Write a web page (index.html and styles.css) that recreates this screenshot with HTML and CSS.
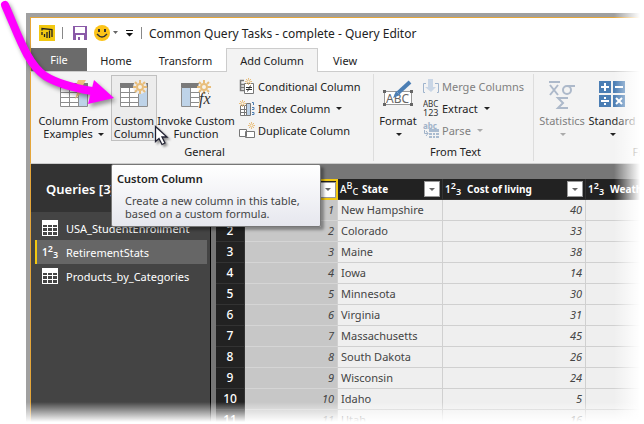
FILE: index.html
```html
<!DOCTYPE html>
<html lang="en">
<head>
<meta charset="utf-8">
<title>Common Query Tasks - complete - Query Editor</title>
<link rel="stylesheet" href="styles.css">
</head>
<body>
<svg class="defs" width="0" height="0" aria-hidden="true">
  <defs>
    <g id="spark" stroke="#e8bd7a" stroke-width="2" fill="none"><circle cx="7" cy="7" r="3" fill="#f7f3ea"/><path d="M7 0v3M7 11v3M0 7h3M11 7h3M2 2l2 2M10 10l2 2M12 2l-2 2M4 10l-2 2"/></g>
    <g id="sheet"><path fill="#fff" d="M0 0h28v24H0z"/><path fill="#7a7a7a" d="M0 0h28v5H0z"/><path fill="none" stroke="#8c8c8c" d="M.5 4v19.500h27V4M9.500 5v18M18.500 5v18M0 9.500h18M0 14.500h18M0 19.500h18"/></g>
    <g id="grid"><path fill="#fff" d="M0 0h16v16H0z"/><path fill="#444" d="M1 5h4v2H1zM6 5h4v2H6zM11 5h4v2h-4zM1 8h4v3H1zM6 8h4v3H6zM11 8h4v3h-4zM1 12h4v3H1zM6 12h4v3H6zM11 12h4v3h-4z"/></g>
  </defs>
</svg>
<main class="window">
  <header class="titlebar">
    <svg class="logo" width="16" height="16"><path fill="#f2c811" d="M0 0h16v16H0z"/><path fill="none" stroke="#222" stroke-width="1.300" d="M3 10V7M5.500 12V9M8 13V7M10.500 13V5.500M3 5.500V3.500l10 1v7.500"/></svg>
    <span class="bar"></span>
    <button class="quick" aria-label="Save"><svg width="14" height="14"><path fill="#8a5aa8" d="M0 0h14v14H0z"/><path fill="#fff" d="M2 1h10v6H2zM3 9h8v5H3z"/><path fill="#8a5aa8" d="M5 11h2v3H5z"/></svg></button>
    <button class="quick smile" aria-label="Send feedback"><svg width="25" height="16"><circle cx="8" cy="8" r="8" fill="#fcc419"/><path fill="#333" d="M4 4h2v3H4zM10 4h2v3h-2z"/><path fill="none" stroke="#333" stroke-width="1.300" d="M3 9q5 6 10 0"/><path fill="#666" d="M19 6h5l-2.500 3z"/></svg></button>
    <button class="quick more" aria-label="Customize toolbar"><svg width="8" height="8"><path fill="#111" d="M0 1h7v1H0zM0 4h7L3.500 7.500z"/></svg></button>
    <span class="bar"></span>
    <h1 class="title">Common Query Tasks - complete - Query Editor</h1>
  </header>
  <nav class="tabs">
    <button class="tab file">File</button>
    <button class="tab home">Home</button>
    <button class="tab transform">Transform</button>
    <button class="tab active">Add Column</button>
    <button class="tab view">View</button>
  </nav>
  <section class="ribbon">
    <div class="group general">
      <div class="tools">
        <button class="big examples"><svg width="28" height="28"><use href="#sheet" y="3"/><path fill="#bed3e8" d="M19 8h8v18h-8z"/><path fill="#ecc27e" d="M18 0h8l-4 7h5L15 19l3-9h-4z"/></svg><span>Column From<br>Examples <i class="caret"></i></span></button>
        <button class="big custom"><svg width="28" height="28"><use href="#sheet" y="3"/><path fill="#bed3e8" d="M19 8h8v18h-8z"/><circle cx="20" cy="7" r="7" fill="#ececec"/><use href="#spark" x="13"/></svg><span>Custom<br>Column</span></button>
        <button class="big invoke"><svg width="30" height="28"><use href="#sheet" y="3"/><path fill="#bed3e8" d="M1 8h8v18H1z"/><circle cx="24" cy="7" r="7" fill="#f3f3f3"/><use href="#spark" x="16"/><path fill="#f3f3f3" d="M20 14h10v14H17z"/><text x="18" y="24" font-family="Liberation Serif, serif" font-size="16" font-style="italic" fill="#333">fx</text></svg><span>Invoke Custom<br>Function</span></button>
        <div class="stack">
          <button class="small"><svg width="16" height="16"><path fill="none" stroke="#777" stroke-width="1.500" d="M5 2.500H1.500v10H5M1 6.500h4M1 9.500h4"/><path fill="#fff" stroke="#777" d="M5.500 5.500h9v10h-9z"/><path fill="none" stroke="#333" d="M7 9.500h6M7 11.500h6M11.500 7.500l-3 6"/><use href="#spark" transform="translate(6) scale(.5)"/></svg>Conditional Column</button>
          <button class="small"><svg width="16" height="16"><path fill="#fff" stroke="#777" d="M1.500 5.500h8v10h-8zM5.500 5v10M1 9.500h8M1 12.500h8"/><path fill="#bed3e8" stroke="#777" d="M7.500 3.500h4v12h-4z"/><path fill="none" stroke="#4b7eb4" d="M13 2.500h1.500V5M13 7.500h2v2h-2M13 12.500h2v2h-2"/><use href="#spark" transform="translate(0 0) scale(.5)"/></svg>Index Column <i class="caret"></i></button>
          <button class="small"><svg width="16" height="16"><path fill="#fff" stroke="#777" d="M.5 7.500h7v7h-7zM6.500 9.500h9v6h-9z"/><use href="#spark" transform="translate(9) scale(.5)"/></svg>Duplicate Column</button>
        </div>
      </div>
      <div class="caption">General</div>
    </div>
    <div class="group text">
      <div class="tools">
        <button class="big format"><svg width="32" height="28"><path fill="#fff" stroke="#999" d="M2.500 11.500h27v13h-27z"/><path fill="#666" d="M1 10h3v3H1zM28 10h3v3h-3zM1 23h3v3H1zM28 23h3v3h-3z"/><text x="4" y="23" font-family="Noto Sans, sans-serif" font-size="12" fill="#666">ABC</text><path stroke="#4b7eb4" stroke-width="4" d="M16 13L28 2"/><path fill="#4b7eb4" d="M11 18l3-7 4 4z"/></svg><span>Format<br><i class="caret"></i></span></button>
        <div class="stack">
          <button class="small dim" disabled><svg width="16" height="16"><path fill="#c9d6e6" d="M5 1h5v8h3l-5 5-6-5h3z"/><path fill="none" stroke="#9fb4cd" d="M3 5.500H.5v9H2M12 5.500h3.500v9H14"/></svg>Merge Columns</button>
          <button class="small"><svg width="17" height="18"><text y="8" font-family="Noto Sans, sans-serif" font-size="8" fill="#333">ABC</text><text y="17" font-family="Noto Sans, sans-serif" font-size="9" fill="#333">123</text></svg>Extract <i class="caret"></i></button>
          <button class="small dim" disabled><svg width="17" height="18"><text y="8" font-family="Noto Sans, sans-serif" font-size="8" font-weight="bold" fill="#a0b2c8">abc</text><path fill="#a9bbd0" d="M6 8h10v9H6z"/><path stroke="#f3f3f3" fill="none" d="M6 11.500h10M6 14.500h10M9.500 11v6M12.500 11v6"/><path stroke="#a0b2c8" fill="none" d="M1.500 9v3.500H5M3 10l2 2.500L3 15"/></svg>Parse <i class="caret"></i></button>
        </div>
      </div>
      <div class="caption">From Text</div>
    </div>
    <div class="group number">
      <div class="tools">
        <button class="big dim" disabled><svg width="28" height="30"><g fill="none" stroke="#adb9ca" stroke-width="2"><path d="M1 2h11M2 5l8 10M10 5L2 15"/><circle cx="19" cy="10" r="4"/><path d="M19 6h8M20 28H10l5-5-5-5h10"/></g></svg><span>Statistics<br><i class="caret"></i></span></button>
        <button class="big"><svg width="28" height="28"><path fill="#4b7eb4" d="M1 1h12v12H1zM15 1h12v12H15zM1 15h12v12H1zM15 15h12v12H15z"/><path stroke="#fff" stroke-width="2" d="M7 3v8M3 7h8M17 7h8M3 21h8M7 17v2M7 23v2M18 18l6 6M24 18l-6 6"/></svg><span>Standard<br><i class="caret"></i></span></button>
      </div>
      <div class="caption">From Number</div>
    </div>
  </section>
  <section class="workspace">
    <aside class="queries">
      <h2>Queries [3]</h2>
      <ul>
        <li><button><svg width="16" height="16"><use href="#grid"/></svg>USA_StudentEnrollment</button></li>
        <li><button class="selected"><span class="num">1<sup>2</sup><sub>3</sub></span>RetirementStats</button></li>
        <li><button><svg width="16" height="16"><use href="#grid"/></svg>Products_by_Categories</button></li>
      </ul>
    </aside>
    <div class="preview">
      <table>
        <colgroup><col class="c-index"><col class="c-rank"><col class="c-state"><col class="c-cost"><col></colgroup>
        <thead><tr>
          <th></th>
          <th class="picked"><div class="head"><button class="filter" aria-label="Filter rank"></button></div></th>
          <th><div class="head"><span class="type abc">A<sup>B</sup><sub>C</sub></span><span>State</span><button class="filter" aria-label="Filter State"></button></div></th>
          <th><div class="head"><span class="type num">1<sup>2</sup><sub>3</sub></span><span>Cost of living</span><button class="filter" aria-label="Filter Cost of living"></button></div></th>
          <th><div class="head"><span class="type num">1<sup>2</sup><sub>3</sub></span><span>Weather</span></div></th>
        </tr></thead>
        <tbody>
          <tr><th>1</th><td>1</td><td>New Hampshire</td><td>40</td><td></td></tr>
          <tr><th>2</th><td>2</td><td>Colorado</td><td>33</td><td></td></tr>
          <tr><th>3</th><td>3</td><td>Maine</td><td>38</td><td></td></tr>
          <tr><th>4</th><td>4</td><td>Iowa</td><td>14</td><td></td></tr>
          <tr><th>5</th><td>5</td><td>Minnesota</td><td>30</td><td></td></tr>
          <tr><th>6</th><td>6</td><td>Virginia</td><td>31</td><td></td></tr>
          <tr><th>7</th><td>7</td><td>Massachusetts</td><td>45</td><td></td></tr>
          <tr><th>8</th><td>8</td><td>South Dakota</td><td>26</td><td></td></tr>
          <tr><th>9</th><td>9</td><td>Wisconsin</td><td>24</td><td></td></tr>
          <tr><th>10</th><td>10</td><td>Idaho</td><td>5</td><td></td></tr>
          <tr><th>11</th><td>11</td><td>Utah</td><td>16</td><td></td></tr>
        </tbody>
      </table>
    </div>
  </section>
</main>
<div class="tooltip" role="tooltip"><strong>Custom Column</strong><p>Create a new column in this table,<br>based on a custom formula.</p></div>
<div class="fade-right"></div>
<div class="fade-bottom"></div>
<svg class="callout" width="180" height="160" aria-hidden="true">
  <g class="pointer"><path fill="none" stroke="#f0f" stroke-width="8" stroke-linecap="round" d="M5 5C18 34 27 64 45 76C58 84 74 88 92 91"/><path fill="#f0f" d="M94 80l20 18-26 6z"/></g>
  <path class="cursor" fill="#fff" stroke="#223" stroke-width="1.300" d="M155.500 126.500v15l3.500-3 3 6 3-1.500-3-6h5z"/>
</svg>
</body>
</html>
```
FILE: styles.css
```css
* { box-sizing: border-box; }
body { margin: 0; height: 100vh; overflow: hidden; position: relative; background: #fff; color: #222; font: 11px/13px "Noto Sans", "Open Sans", sans-serif; }
button { margin: 0; padding: 0; border: 0; background: none; color: inherit; font: inherit; white-space: nowrap; }
svg { display: block; flex: none; }
.defs { position: absolute; }
.window { margin: 13px 0 0 26px; height: calc(100vh - 13px); display: flex; flex-direction: column; border: solid #a0a0a0; border-width: 4px 0 0 4px; overflow: hidden; }
.titlebar { flex: none; height: 31px; display: flex; align-items: center; padding-left: 8px; border: solid #e5a63a; border-width: 1px 0 0 1px; }
.bar { width: 1px; height: 12px; background: #888; margin: 0 10px 0 7px; }
.smile { margin-left: 7px; }
.more { margin-left: 7px; }
.more + .bar { margin: 0 7px; }
.title { margin: 0; font-size: 12px; font-weight: 400; }
.tabs { flex: none; height: 24px; display: flex; border-bottom: 1px solid #ccc; border-left: 1px solid #e5a63a; }
.tab { height: 24px; }
.file { width: 56px; height: 23px; background: #6b6b6b; color: #fff; }
.home { width: 58px; }
.transform { width: 81px; }
.active { width: 92px; background: #f3f3f3; border: 1px solid #ccc; border-bottom: 0; }
.view { width: 54px; }

.ribbon { flex: none; display: flex; height: 92px; padding-top: 2px; background: #f3f3f3; border-left: 1px solid #e5a63a; border-bottom: 1px solid #ccc; overflow: hidden; }
.group { flex: none; display: flex; flex-direction: column; height: 87px; border-right: 1px solid #ddd; }
.general { width: 343px; padding-left: 5px; }
.text { width: 160px; padding-left: 4px; }
.number { width: 268px; padding-left: 3px; }
.tools { display: flex; height: 70px; padding-top: 1px; }
.caption { text-align: center; line-height: 22px; }
.big { width: 50px; height: 66px; padding-top: 4px; display: flex; flex-direction: column; align-items: center; border: 1px solid transparent; }
.big span { display: block; margin-top: auto; text-align: center; line-height: 13px; }
.examples { width: 75px; }
.custom { width: 46px; background: #ececec; border-color: #c0c0c0; }
.invoke { width: 78px; }
.format { width: 40px; margin-right: 4px; }
.dim { color: #808080; }
.caret { display: inline-block; vertical-align: 2px; margin-left: 2px; border: solid transparent; border-width: 3px 3px 0; border-top-color: #222; }
.dim .caret { border-top-color: #aaa; }
.stack { display: flex; flex-direction: column; padding-left: 4px; }
.big + .stack { flex: 1; }
.text .stack { padding-left: 1px; }
.small { height: 22px; display: flex; align-items: center; gap: 3px; }
.small svg { width: 16px; }
.small .caret { margin-left: 3px; }

.workspace { flex: 1; min-height: 0; display: flex; background: #777; border-left: 1px solid #e5a63a; }
.queries { flex: none; width: 180px; background: #444; border-right: 1px solid #000; color: #fff; }
.queries h2 { margin: 0; height: 48px; padding-left: 15px; line-height: 50px; background: #333; font-size: 13px; font-weight: 600; }
.queries ul { list-style: none; margin: 0; padding: 4px 3px 0 4px; }
.queries button { width: 100%; height: 24px; padding-left: 5px; display: flex; align-items: center; gap: 8px; border-left: 2px solid transparent; }
.queries .selected { background: #666; border-left-color: #f2c811; }
.num, .abc { width: 16px; line-height: 16px; font-size: 10px; white-space: nowrap; }
.num { font-weight: 600; }
.num sup, .num sub, .abc sup, .abc sub { font-size: 9px; line-height: 0; }
.num sup, .abc sup { vertical-align: 4px; }
.num sub, .abc sub { vertical-align: -2px; }

.preview { flex: 1; min-width: 0; padding: 15px 0 0 5px; overflow: hidden; }
table { width: 100%; table-layout: fixed; border-collapse: separate; border-spacing: 0; background: #efefef; font-size: 11px; }
.c-index { width: 29px; }
.c-rank { width: 93px; }
.c-state { width: 105px; }
.c-cost { width: 143px; }
th, td { height: 21px; padding: 0 3px; line-height: 20px; border: solid #d0d0d0; border-width: 0 1px 1px 0; overflow: hidden; white-space: nowrap; }
thead th { background: #222; color: #fff; border-color: #333; text-align: left; font-size: 10px; font-weight: 700; padding: 0 2px; }
thead .picked { padding: 0; border: 2px solid #f2c811; }
.head { display: flex; align-items: center; gap: 6px; }
.picked .head { height: 17px; }
.type.abc { font-weight: 500; }
.filter { width: 16px; height: 16px; margin-left: auto; background: #fff; border: 1px solid #999; display: grid; place-items: center; }
.filter::after { content: ""; border: solid transparent; border-width: 3px 3px 0; border-top-color: #666; }
tbody th { background: #222; color: #fff; border-color: #333; font-size: 12px; font-weight: 500; text-align: center; }
td { color: #444; }
td:nth-child(2) { background: #c7c7c7; border-bottom-color: #d5d5d5; }
td:nth-child(2), td:nth-child(4) { text-align: right; font-style: italic; }

.tooltip { position: absolute; left: 111px; top: 164px; width: 210px; height: 63px; padding: 7px 5px; background: linear-gradient(#fff, #e6e7ee); border: 1px solid #777; border-radius: 2px; box-shadow: 3px 3px 3px rgba(0, 0, 0, .35); color: #444; }
.tooltip strong { color: #222; font-weight: 600; }
.tooltip p { margin: 9px 0 0 8px; white-space: nowrap; }
.fade-right { position: absolute; top: 0; bottom: 0; right: 0; width: 30px; background: linear-gradient(90deg, rgba(255, 255, 255, 0), #fff 26px); }
.fade-bottom { position: absolute; left: 0; right: 0; bottom: 0; height: 22px; background: linear-gradient(rgba(255, 255, 255, 0), #fff 20px); }
.callout { position: absolute; left: 0; top: 0; pointer-events: none; }
.pointer { filter: drop-shadow(2px 3px 2px rgba(0, 0, 0, .4)); }
.cursor { filter: drop-shadow(2px 2px 1px rgba(0, 0, 0, .4)); }
```
